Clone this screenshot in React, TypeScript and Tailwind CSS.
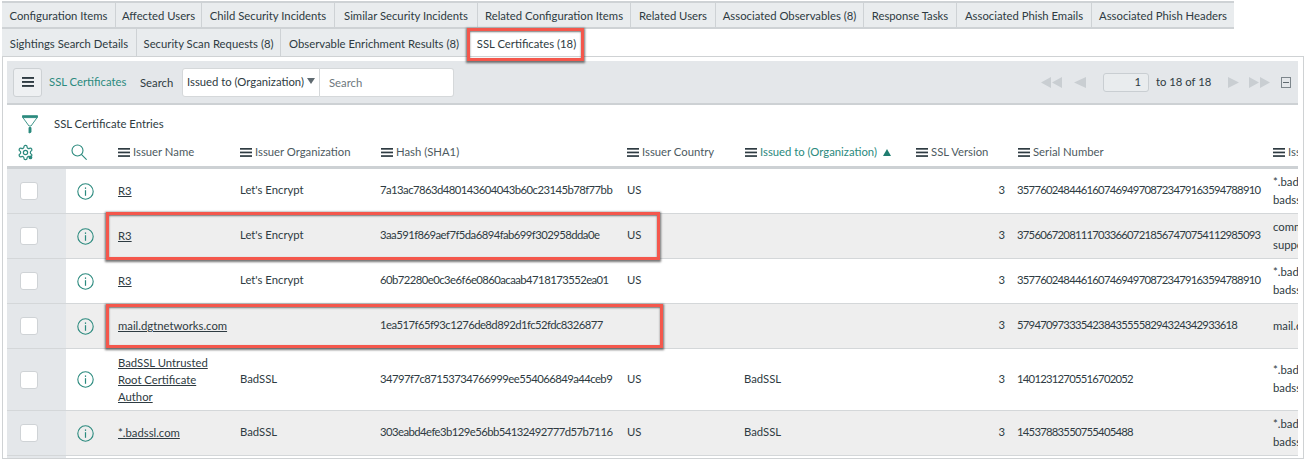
import React from "react";

const font = { fontFamily: '"Lato", "Liberation Sans", sans-serif' };
const cols = "grid grid-cols-[59px_40px_122px_141px_246px_118px_171px_102px_255px_37px]";

const tabs1: [string, string][] = [
  ["Configuration Items", "w-[114px]"],
  ["Affected Users", "w-[86px]"],
  ["Child Security Incidents", "w-[133px]"],
  ["Similar Security Incidents", "w-[143px]"],
  ["Related Configuration Items", "w-[153px]"],
  ["Related Users", "w-[85px]"],
  ["Associated Observables (8)", "w-[148px]"],
  ["Response Tasks", "w-[93px]"],
  ["Associated Phish Emails", "w-[135px]"],
  ["Associated Phish Headers", "w-[142px]"],
];
const tabs2: [string, string][] = [
  ["Sightings Search Details", "w-[135px]"],
  ["Security Scan Requests (8)", "w-[144px]"],
  ["Observable Enrichment Results (8)", "w-[187px]"],
];

type Row = {
  h: string;
  name: string[];
  org: string;
  hash: string;
  country: string;
  issued: string;
  serial: string;
  last: string[];
};
const rows: Row[] = [
  { h: "h-[45px]", name: ["R3"], org: "Let's Encrypt", hash: "7a13ac7863d480143604043b60c23145b78f77bb", country: "US", issued: "", serial: "357760248446160746949708723479163594788910", last: ["*.badssl.com", "badssl.com"] },
  { h: "h-[45px]", name: ["R3"], org: "Let's Encrypt", hash: "3aa591f869aef7f5da6894fab699f302958dda0e", country: "US", issued: "", serial: "375606720811170336607218567470754112985093", last: ["common", "support"] },
  { h: "h-[45px]", name: ["R3"], org: "Let's Encrypt", hash: "60b72280e0c3e6f6e0860acaab4718173552ea01", country: "US", issued: "", serial: "357760248446160746949708723479163594788910", last: ["*.badssl.com", "badssl.com"] },
  { h: "h-[45px]", name: ["mail.dgtnetworks.com"], org: "", hash: "1ea517f65f93c1276de8d892d1fc52fdc8326877", country: "", issued: "", serial: "57947097333542384355558294324342933618", last: ["mail.dgtnetworks.com"] },
  { h: "h-[62px]", name: ["BadSSL Untrusted", "Root Certificate", "Author"], org: "BadSSL", hash: "34797f7c87153734766999ee554066849a44ceb9", country: "US", issued: "BadSSL", serial: "14012312705516702052", last: ["*.badssl.com", "badssl.com"] },
  { h: "h-[45px]", name: ["*.badssl.com"], org: "BadSSL", hash: "303eabd4efe3b129e56bb54132492777d57b7116", country: "US", issued: "BadSSL", serial: "14537883550755405488", last: ["*.badssl.com", "badssl.com"] },
];

function Burger({ className = "w-[12px] h-[9px]" }: { className?: string }) {
  return (
    <svg viewBox="0 0 12 9" className={"shrink-0 " + className} fill="#2e3b42" preserveAspectRatio="none">
      <rect x="0" y="0" width="12" height="1.7" />
      <rect x="0" y="3.6" width="12" height="1.7" />
      <rect x="0" y="7.2" width="12" height="1.7" />
    </svg>
  );
}

function Info() {
  return (
    <svg viewBox="0 0 17 17" className="w-[17px] h-[17px]" fill="none" stroke="#2b8a7e">
      <circle cx="8.5" cy="8.5" r="7.7" strokeWidth="1.1" />
      <rect x="7.9" y="7.2" width="1.2" height="5.6" fill="#2b8a7e" stroke="none" />
      <rect x="7.9" y="4.4" width="1.2" height="1.5" fill="#2b8a7e" stroke="none" />
    </svg>
  );
}

function Funnel() {
  return (
    <svg viewBox="0 0 16 19" className="w-[16px] h-[19px]" fill="none" stroke="#2b8a7e" strokeWidth="0.9">
      <path d="M0.5 0.7 H15.5 V2.6 H0.5 Z" fill="#2b8a7e" />
      <path d="M1.2 3 L7 11 M14.8 3 L9 11 M7 11 H9" />
      <path d="M7 12.5 H9 V17.2 L7 18 Z" fill="#2b8a7e" />
    </svg>
  );
}

function Gear() {
  return (
    <svg viewBox="0 0 24 24" className="w-[17px] h-[17px]" fill="none" stroke="#2b8a7e" strokeWidth="1.7" strokeLinecap="round" strokeLinejoin="round">
      <path d="M12.22 2h-.44a2 2 0 0 0-2 2v.18a2 2 0 0 1-1 1.73l-.43.25a2 2 0 0 1-2 0l-.15-.08a2 2 0 0 0-2.73.73l-.22.38a2 2 0 0 0 .73 2.73l.15.1a2 2 0 0 1 1 1.72v.51a2 2 0 0 1-1 1.74l-.15.09a2 2 0 0 0-.73 2.73l.22.38a2 2 0 0 0 2.73.73l.15-.08a2 2 0 0 1 2 0l.43.25a2 2 0 0 1 1 1.73V20a2 2 0 0 0 2 2h.44a2 2 0 0 0 2-2v-.18a2 2 0 0 1 1-1.73l.43-.25a2 2 0 0 1 2 0l.15.08a2 2 0 0 0 2.73-.73l.22-.39a2 2 0 0 0-.73-2.73l-.15-.08a2 2 0 0 1-1-1.74v-.5a2 2 0 0 1 1-1.74l.15-.09a2 2 0 0 0 .73-2.73l-.22-.38a2 2 0 0 0-2.73-.73l-.15.08a2 2 0 0 1-2 0l-.43-.25a2 2 0 0 1-1-1.73V4a2 2 0 0 0-2-2z" />
      <circle cx="12" cy="12" r="3" />
      <circle cx="19" cy="19" r="2.6" fill="#2b8a7e" stroke="none" />
    </svg>
  );
}

function Search() {
  return (
    <svg viewBox="0 0 16 16" className="w-[16px] h-[16px]" fill="none" stroke="#2b8a7e" strokeWidth="1.1" strokeLinecap="round">
      <circle cx="6.5" cy="6.5" r="5.5" />
      <path d="M10.6 10.6 L15.3 15.3" />
    </svg>
  );
}

function Pager() {
  const c = "#c9ced2";
  return (
    <div className="flex items-center ml-auto">
      <svg viewBox="0 0 46 11" className="w-[46px] h-[11px]" fill={c}>
        <path d="M11 0 V11 L1 5.5 Z M22 0 V11 L12 5.5 Z M46 0 V11 L34 5.5 Z" />
      </svg>
      <div className="ml-[17px] w-[46px] h-[19px] rounded-[3px] border border-[#c9ced2] bg-[#e9ecee] flex items-center justify-end pr-[7px]">1</div>
      <span className="ml-[7px] w-[72px]">to 18 of 18</span>
      <svg viewBox="0 0 42 11" className="w-[42px] h-[11px]" fill={c}>
        <path d="M0 0 V11 L11 5.5 Z M21 0 V11 L31 5.5 Z M32 0 V11 L42 5.5 Z" />
      </svg>
      <div className="ml-[11px] mr-[7px] w-[10px] h-[11px] border border-[#7d868c] flex items-center justify-center">
        <div className="w-[6px] h-px bg-[#5f6a70]" />
      </div>
    </div>
  );
}

function Head({ label, active, sort }: { label: string; active?: boolean; sort?: boolean }) {
  return (
    <div className="flex items-center pl-[12px] gap-[3px] whitespace-nowrap overflow-hidden">
      <Burger />
      <span className={active ? "text-[#2b8a7e]" : "text-[#4d5a61]"}>{label}</span>
      {sort && <span className="ml-[3px] w-0 h-0 border-l-[4px] border-r-[4px] border-b-[7px] border-l-transparent border-r-transparent border-b-[#1f7d70]" />}
    </div>
  );
}

function Highlight({ className }: { className: string }) {
  return <div className={"absolute border-[3px] border-[#f4574c] shadow-[0_1px_2px_1px_rgba(60,60,60,0.7),inset_0_1px_2px_rgba(60,60,60,0.7)] pointer-events-none " + className} />;
}

export default function App() {
  return (
    <div className="relative w-[1305px] h-[459px] overflow-hidden bg-white text-[11.3px] text-[#2e3b42] pt-px pl-[2px]" style={font}>
      <div className="flex w-[1232px] h-[28px] bg-[#e9ecee] border-t-2 border-b-2 border-[#ced2d5]">
        {tabs1.map(([t, w], i) => (
          <div key={t} className={`${w} shrink-0 flex items-center justify-center whitespace-nowrap pt-[3px] ${i < tabs1.length - 1 ? "border-r border-[#ced2d5]" : ""}`}>{t}</div>
        ))}
      </div>
      <div className="flex h-[27px]">
        {tabs2.map(([t, w]) => (
          <div key={t} className={`${w} shrink-0 flex items-center justify-center whitespace-nowrap bg-[#e9ecee] border-r border-[#ced2d5] pt-[3px]`}>{t}</div>
        ))}
        <div className="w-[115px] flex items-center justify-center whitespace-nowrap pt-[3px] pl-[2px]">SSL Certificates (18)</div>
      </div>
      <div className="w-[1302px] h-[403px] border border-[#cfd2d4] pt-[4px] pl-[4px] pr-[5px] overflow-hidden">
        <div className="flex items-center h-[44px] bg-[#e4e7ea] border-b-2 border-[#cdd1d4] pl-[6px]">
          <div className="w-[29px] h-[29px] rounded-[3px] border border-[#cdd1d4] bg-[#eef0f2] flex items-center justify-center">
            <Burger className="w-[12px] h-[10px]" />
          </div>
          <span className="ml-[7px] w-[75px] text-[#2b8a7e] whitespace-nowrap">SSL Certificates</span>
          <span className="ml-[16px] w-[42px] pt-[2px]">Search</span>
          <div className="flex items-center w-[138px] h-[29px] bg-white rounded-l-[3px] border border-[#d5d8da] pl-[4px] whitespace-nowrap">
            Issued to (Organization)
            <span className="ml-[3px] mb-[3px] w-0 h-0 border-l-[4px] border-r-[4px] border-t-[6px] border-l-transparent border-r-transparent border-t-[#5f6a70]" />
          </div>
          <div className="flex items-center w-[134px] h-[29px] bg-white rounded-r-[3px] border border-l-0 border-[#d5d8da] pl-[9px] pt-[2px] text-[#6d777d]">Search</div>
          <Pager />
        </div>
        <div className="flex items-center h-[34px] pl-[15px] pt-[4px]">
          <Funnel />
          <span className="ml-[16px]">SSL Certificate Entries</span>
        </div>
        <div className={`${cols} h-[30px] border-b-[3px] border-[#cdd1d4] pb-[1px]`}>
          <div className="flex items-center pl-[10px]"><Gear /></div>
          <div className="flex items-center pl-[5px]"><Search /></div>
          <Head label="Issuer Name" />
          <Head label="Issuer Organization" />
          <Head label="Hash (SHA1)" />
          <Head label="Issuer Country" />
          <Head label="Issued to (Organization)" active sort />
          <Head label="SSL Version" />
          <Head label="Serial Number" />
          <Head label="Issued to (Common Name)" />
        </div>
        {rows.map((r, i) => {
          const even = i % 2 === 1;
          return (
            <div key={i} className={`${cols} ${r.h} border-b border-[#d4d7d9] ${even ? "bg-[#eeeeee]" : "bg-white"}`}>
              <div className="flex items-center bg-[#e4e7ea] pl-[13px]">
                <div className="w-[18px] h-[18px] bg-white rounded-[3px] border border-[#cfd3d6]" />
              </div>
              <div className="flex items-center justify-center pr-[2px]"><Info /></div>
              <div className="flex flex-col justify-center pl-[12px] pb-px leading-[17px]">
                {r.name.map((n) => <a key={n} className="underline whitespace-nowrap">{n}</a>)}
              </div>
              <div className="flex items-center pl-[12px] pb-px whitespace-nowrap">{r.org}</div>
              <div className="flex items-center pl-[11px] pb-px whitespace-nowrap tracking-[-0.55px]">{r.hash}</div>
              <div className="flex items-center pl-[12px] pb-px">{r.country}</div>
              <div className="flex items-center pl-[11px] pb-px">{r.issued}</div>
              <div className="flex items-center justify-end pr-px pb-px">3</div>
              <div className="flex items-center pl-[11px] pb-px whitespace-nowrap tracking-[-0.76px]">{r.serial}</div>
              <div className="flex flex-col justify-center pl-[12px] pb-px overflow-hidden whitespace-nowrap leading-[18px]">
                {r.last.map((l) => <span key={l}>{l}</span>)}
              </div>
            </div>
          );
        })}
        <div className={`${cols} h-[8px]`}><div className="bg-[#e4e7ea]" /></div>
      </div>
      <Highlight className="left-[467px] top-[28px] w-[117px] h-[33px]" />
      <Highlight className="left-[106px] top-[212px] w-[554px] h-[48px]" />
      <Highlight className="left-[106px] top-[304px] w-[557px] h-[44px]" />
    </div>
  );
}
